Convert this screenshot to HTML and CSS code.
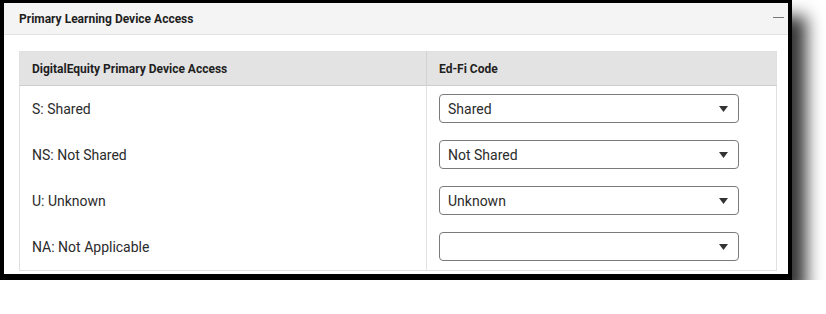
FILE: index.html
```html
<!DOCTYPE html>
<html lang="en">
<head>
    <meta charset="UTF-8">
    <title>Primary Learning Device Access</title>
    <link rel="stylesheet" href="styles.css">
</head>
<body>
    <div class="frame">
        <div class="panel">
            <div class="panel-header">
                <span class="panel-title">Primary Learning Device Access</span>
                <span class="collapse"></span>
            </div>
            <div class="panel-body">
                <table class="mapping">
                    <thead>
                        <tr>
                            <th class="col-source">DigitalEquity Primary Device Access</th>
                            <th>Ed-Fi Code</th>
                        </tr>
                    </thead>
                    <tbody>
                        <tr>
                            <td>S: Shared</td>
                            <td><div class="select"><span>Shared</span><svg width="9" height="6" viewBox="0 0 9 6"><path d="M0 0h9L4.5 6z" fill="#333"/></svg></div></td>
                        </tr>
                        <tr>
                            <td>NS: Not Shared</td>
                            <td><div class="select"><span>Not Shared</span><svg width="9" height="6" viewBox="0 0 9 6"><path d="M0 0h9L4.5 6z" fill="#333"/></svg></div></td>
                        </tr>
                        <tr>
                            <td>U: Unknown</td>
                            <td><div class="select"><span>Unknown</span><svg width="9" height="6" viewBox="0 0 9 6"><path d="M0 0h9L4.5 6z" fill="#333"/></svg></div></td>
                        </tr>
                        <tr>
                            <td>NA: Not Applicable</td>
                            <td><div class="select"><span></span><svg width="9" height="6" viewBox="0 0 9 6"><path d="M0 0h9L4.5 6z" fill="#333"/></svg></div></td>
                        </tr>
                    </tbody>
                </table>
            </div>
        </div>
    </div>
</body>
</html>
```

FILE: styles.css
```css
body {
    margin: 0;
    background: #fff;
    font-family: Roboto, 'Liberation Sans', sans-serif;
    color: #222;
}

.frame {
    width: 784px;
    border: 4px solid #000;
    border-top-width: 3px;
    border-bottom-width: 6px;
    box-shadow: 14px 16px 16px rgba(0, 0, 0, 0.8);
}

.panel {
    background: #fff;
}

.panel-header {
    display: flex;
    align-items: center;
    justify-content: space-between;
    height: 31px;
    padding: 0 4px 0 15px;
    background: #f4f4f4;
    border-bottom: 1px solid #e2e2e2;
}

.panel-title {
    font-size: 12px;
    font-weight: bold;
    color: #1f1f1f;
}

.collapse {
    width: 11px;
    height: 1px;
    margin-top: -2px;
    background: #777;
}

.panel-body {
    padding: 16px 11px 3px 15px;
}

.mapping {
    width: 758px;
    border-collapse: collapse;
    border: 1px solid #e0e0e0;
    font-size: 14px;
}

.mapping th {
    height: 33px;
    padding: 0 12px;
    text-align: left;
    font-size: 12px;
    font-weight: bold;
    color: #1f1f1f;
    background: #e3e3e3;
    border-bottom: 1px solid #cfcfcf;
}

.mapping .col-source {
    width: 382px;
    border-right: 1px solid #d2d2d2;
}

.mapping td {
    height: 46px;
    padding: 0 12px;
    color: #2b2b2b;
}

.mapping td:first-child {
    border-right: 1px solid #e2e2e2;
}

.select {
    display: flex;
    align-items: center;
    justify-content: space-between;
    box-sizing: border-box;
    width: 300px;
    height: 29px;
    margin-top: -1px;
    padding: 0 10px 0 8px;
    border: 1px solid #7a7a7a;
    border-radius: 4px;
    background: #fff;
}
```
